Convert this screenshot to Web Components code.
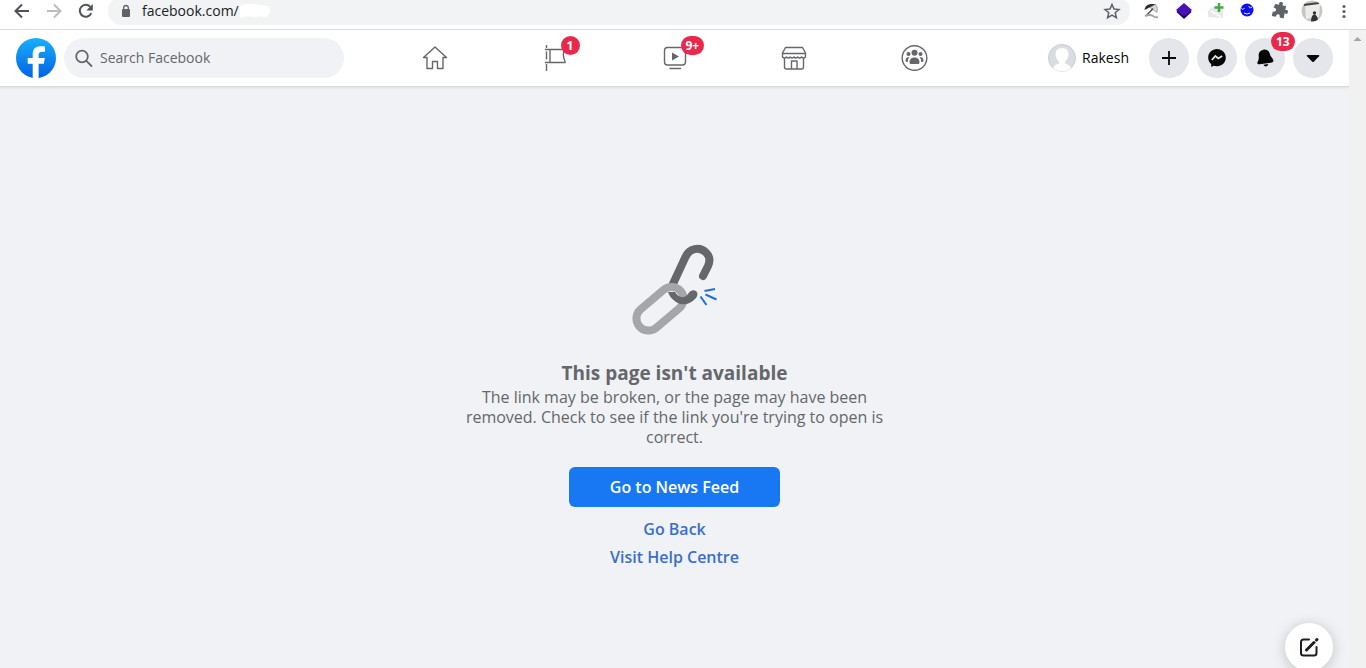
<!DOCTYPE html>
<html lang="en">
<head>
<meta charset="utf-8">
<title>Page not available | Facebook</title>
<style>
html, body { margin: 0; height: 100%; }
body { font-family: "Open Sans", "Noto Sans", sans-serif; color: #050505; background: #f0f2f5; overflow: hidden; }
</style>
</head>
<body>
<browser-window></browser-window>

<script>
const define = (name, html) => {
  const template = document.createElement('template');
  template.innerHTML = html;
  customElements.define(name, class extends HTMLElement {
    constructor() {
      super();
      this.attachShadow({ mode: 'open' }).append(template.content.cloneNode(true));
    }
  });
};

define('browser-toolbar', `
<style>
:host { display: flex; align-items: center; height: 30px; box-sizing: border-box; padding: 0 11px 7px 11px; background: #fff; border-bottom: 1px solid #dadce0; }
button { border: 0; padding: 0; background: none; display: block; flex: none; height: 22px; }
svg { display: block; }
.nav { display: flex; gap: 10px; width: 97px; flex: none; }
.address { flex: 1; display: flex; align-items: center; height: 28px; box-sizing: border-box; padding: 0 8px 0 12px; background: #f1f3f4; border-radius: 14px; min-width: 0; }
.address label { flex: none; margin-right: 10px; }
input { width: 98px; border: 0; padding: 0; background: none; outline: 0; font: 14px/20px "Open Sans", sans-serif; color: #202124; height: 20px; }
.blot { flex: none; margin-right: auto; }
.ext { display: flex; align-items: center; gap: 10px; flex: none; padding-left: 11px; }
</style>
<div class="nav">
  <button aria-label="Back"><svg width="22" height="22" viewBox="0 0 22 22" fill="none" stroke="#50545a" stroke-width="2"><path d="M18 11H5M11 4.5 4.5 11l6.500 6.500"/></svg></button>
  <button aria-label="Forward"><svg width="22" height="22" viewBox="0 0 22 22" fill="none" stroke="#b9bbbe" stroke-width="2"><path d="M4 11h13M11 4.500 17.500 11 11 17.500"/></svg></button>
  <button aria-label="Reload"><svg width="22" height="22" viewBox="0 0 22 22"><path d="M16.300 13.200A6 6 0 1 1 15.300 6.800" fill="none" stroke="#50545a" stroke-width="2"/><path d="M17.800 4v6.500h-6.500z" fill="#50545a"/></svg></button>
</div>
<div class="address">
  <label for="url" aria-label="Address"><svg width="12" height="14" viewBox="0 0 12 14"><rect x="2" y="5" width="8" height="8" rx="1" fill="#5f6368"/><path d="M3.700 6V3.800a2.300 2.300 0 0 1 4.600 0V6" fill="none" stroke="#5f6368" stroke-width="1.300"/></svg></label>
  <input id="url" value="facebook.com/">
  <svg class="blot" width="32" height="18" viewBox="0 0 32 18"><path d="M0 4Q8 0 18 3l10 1q4 4 1 8l-3 3q-6-1-12 0-7-2-14 1z" fill="#fff"/></svg>
  <button aria-label="Bookmark"><svg width="20" height="22" viewBox="0 0 20 22"><path d="m10 4.500 2 4.600 5 .4-3.800 3.300 1.200 4.900-4.400-2.600-4.400 2.600 1.200-4.900L3 9.500l5-.4z" fill="none" stroke="#5f6368" stroke-width="1.500"/></svg></button>
</div>
<div class="ext">
  <button aria-label="Adblock"><svg width="22" height="22" viewBox="0 0 22 22"><path d="M3.500 10C4 5 9 3 14.500 4.500z" fill="#2b2b2b"/><path d="M14.500 4.500q3 3 1.500 8L9 7.500z" fill="#d8dad8" stroke="#777" stroke-width=".6"/><path d="M12 8.500 5.500 15.500" stroke="#444" stroke-width="1.300"/><path d="M4 16q5-2 8 0t5 1" fill="none" stroke="#a5a5a5" stroke-width="2"/></svg></button>
  <button aria-label="Layers"><svg width="22" height="22" viewBox="0 0 22 22"><path d="m3.500 12 1.500-2h12l1.500 2-7.500 7z" fill="#24007a"/><path d="M11 3l8 7-8 6-8-6z" fill="#4a12b5"/></svg></button>
  <button aria-label="Add-on"><svg width="22" height="22" viewBox="0 0 22 22"><path d="M3 17q-1-8 5-10h8l2 4v7z" fill="#e8e8e8"/><path d="m6 11 10 6" stroke="#fafafa" stroke-width="2"/><path d="M14 3v9M9.500 7.500h9" stroke="#43a847" stroke-width="2.500"/></svg></button>
  <button aria-label="Assistant"><svg width="22" height="22" viewBox="0 0 22 22"><circle cx="10" cy="10" r="6.500" fill="#0a12ef"/><path d="M3.500 7q2 4 4 1M12 6q0 3 3 1M7 13q3 2 6 0" fill="none" stroke="#e6e8ff" stroke-width="1"/></svg></button>
  <button aria-label="Extensions"><svg width="22" height="22" viewBox="0 0 22 22"><path d="M5 5h4q-1.500-3 1.500-3T12 5h4v4q3-1.500 3 1.500T16 12v5.500h-4q0-3-2-3t-2 3H4V13q3 0 3-2T4 9z" transform="rotate(12 11 11)" fill="#5f6368"/></svg></button>
  <button aria-label="Profile"><svg width="22" height="22" viewBox="0 0 22 22"><defs><clipPath id="face"><circle cx="11" cy="11" r="10.500"/></clipPath></defs><g clip-path="url(#face)"><path d="M0 0h22v22H0z" fill="#c6c6c4"/><path d="M4 5 19 4l-1 13-13 2z" fill="#ececea"/><path d="m2 4 16-2v2L3 6z" fill="#444"/><path d="M10 22q0-7 3-7.500 4 0 4 7.500z" fill="#333"/><circle cx="13.500" cy="13" r="1.700" fill="#333"/></g></svg></button>
  <button aria-label="Menu"><svg width="22" height="22" viewBox="0 0 22 22" fill="#5f6368"><circle cx="11" cy="6.500" r="1.600"/><circle cx="11" cy="11.500" r="1.600"/><circle cx="11" cy="16.500" r="1.600"/></svg></button>
</div>`);

define('count-badge', `
<style>
:host { position: absolute; display: block; box-sizing: border-box; min-width: 19px; height: 19px; padding: 0 5px; border-radius: 10px; background: #e9294b; color: #fff; font-size: 12px; line-height: 19px; font-weight: 700; text-align: center; }
</style><slot></slot>`);

define('nav-tab', `
<style>
:host { display: block; flex: 1; }
a { display: flex; align-items: center; justify-content: center; height: 56px; color: #65676b; }
span { position: relative; display: block; width: 28px; height: 28px; }
::slotted(svg) { display: block; }
::slotted(count-badge) { left: 20px; top: -8px; }
</style><a href="#"><span><slot></slot></span></a>`);

define('round-button', `
<style>
:host { display: block; position: relative; flex: none; }
button { display: flex; align-items: center; justify-content: center; width: 40px; height: 40px; border: 0; padding: 0; border-radius: 50%; background: #e4e6eb; color: #050505; }
::slotted(count-badge) { left: 26px; top: -6px; }
</style><button><slot></slot></button><slot name="badge"></slot>`);

define('site-header', `
<style>
:host { display: grid; grid-template-columns: 1fr 600px 1fr; align-items: center; height: 57px; box-sizing: border-box; padding: 0 16px; background: #fff; border-bottom: 1px solid #d9dbdf; box-shadow: 0 1px 2px rgba(0,0,0,.08); }
.left, .right { display: flex; align-items: center; gap: 8px; }
.right { justify-content: flex-end; }
nav { display: flex; }
.logo, .logo svg { display: block; }
.search { display: flex; align-items: center; box-sizing: border-box; width: 280px; height: 40px; padding: 0 10px; gap: 6px; border-radius: 20px; background: #f0f2f5; }
.search label { display: block; height: 20px; }
input { flex: 1; min-width: 0; border: 0; padding: 0; background: none; outline: 0; font: 14px/20px "Open Sans", sans-serif; color: #65676b; }
input::placeholder { color: #65676b; opacity: 1; }
.user { display: flex; align-items: center; gap: 6px; margin-right: 12px; color: #050505; text-decoration: none; font-size: 14px; line-height: 20px; font-weight: 500; }
</style>
<div class="left">
  <a class="logo" href="#" aria-label="Facebook"><svg width="40" height="40" viewBox="0 0 40 40"><defs><linearGradient id="g" x2="0" y2="1"><stop stop-color="#19afff"/><stop offset="1" stop-color="#0062e0"/></linearGradient></defs><circle cx="20" cy="20" r="20" fill="url(#g)"/><path d="M16.700 39.800V25.800h-5v-5.800h5v-3.700c0-5.200 2.700-8.100 7.800-8.100 2 0 3.500.2 4.500.4v5.200h-2.800c-2.800 0-3.600 1.200-3.600 3.500V20h6.200l-1 5.800h-5.200v14a20 20 0 0 1-5.900 0z" fill="#fff"/></svg></a>
  <div class="search"><label for="q" aria-label="Search"><svg width="20" height="20" viewBox="0 0 20 20" fill="none" stroke="#65676b" stroke-width="1.800"><circle cx="8" cy="8.500" r="5.800"/><path d="m12.300 12.800 5.200 5.200" stroke-linecap="round"/></svg></label><input id="q" placeholder="Search Facebook"></div>
</div>
<nav>
  <nav-tab><svg width="28" height="28" viewBox="0 0 28 28" fill="none" stroke="currentColor" stroke-width="1.400" stroke-linejoin="round"><path d="M14 3 2.500 13.500H6V24.500h5.500v-7h5v7H22v-11h3.500z"/></svg></nav-tab>
  <nav-tab><svg width="28" height="28" viewBox="0 0 28 28" fill="none" stroke="currentColor" stroke-width="1.400"><path d="M5.500 1v3M5.500 7.500v8M5.500 20v7M4 5.500h20.500M4 18.500h20.500M9 5.500v13M24 5.500q-3.500 5 .5 13"/></svg><count-badge>1</count-badge></nav-tab>
  <nav-tab><svg width="28" height="28" viewBox="0 0 28 28" fill="none" stroke="currentColor" stroke-width="1.400"><rect x="3.500" y="3.500" width="21" height="17.500" rx="3"/><path d="M9 24.500h10.500" stroke-linecap="round"/><path d="m11 8.500 7 4-7 4z" fill="currentColor" stroke="none"/></svg><count-badge>9+</count-badge></nav-tab>
  <nav-tab><svg width="28" height="28" viewBox="0 0 28 28" fill="none" stroke="currentColor" stroke-width="1.400" stroke-linejoin="round"><path d="M4.500 3.500h17l3 5.500v4q-2 2-4 0-2 2-3.800 0-2 2-3.700 0-2 2-3.800 0-2 2-3.700 0-2 2-4 0V9zM1.500 9.500h23M3.500 14v9q0 2 2 2h15q2 0 2-2v-9M10.500 24.500v-7.500h5.500v7.500"/></svg></nav-tab>
  <nav-tab><svg width="28" height="28" viewBox="0 0 28 28"><circle cx="13.500" cy="14" r="12.300" fill="none" stroke="currentColor" stroke-width="1.400"/><g fill="currentColor" transform="translate(-.5)"><circle cx="14" cy="8.800" r="3"/><circle cx="8" cy="10" r="2"/><circle cx="20" cy="10" r="2"/><path d="M9 18.500c0-3.500 2-5 5-5s5 1.500 5 5q0 1.500-1.500 1.500h-7q-1.500 0-1.500-1.500zM5 16.500c0-2.500 1.500-3.500 4-3.500-1.200 1.500-1.700 2.800-1.700 5-1.500 0-2.300-.5-2.300-1.500zM23 16.500c0-2.500-1.500-3.500-4-3.500 1.200 1.500 1.700 2.800 1.700 5 1.500 0 2.300-.5 2.300-1.500z"/></g></svg></nav-tab>
</nav>
<div class="right">
  <a class="user" href="#"><svg width="28" height="28" viewBox="0 0 28 28"><circle cx="14" cy="14" r="13.500" fill="#d9dce1" stroke="#c9ccd1"/><path d="M5 24q1-3.500 6-4.500v-2Q7.500 15 7.500 10q0-6 6.500-6t6.500 6q0 5-3.500 7.500v2q5 1 6 4.500a13 13 0 0 1-18 0z" fill="#fff"/></svg>Rakesh</a>
  <round-button aria-label="Create"><svg width="20" height="20" viewBox="0 0 20 20"><path d="M10 3v14M3 10h14" stroke="currentColor" stroke-width="1.800"/></svg></round-button>
  <round-button aria-label="Messenger"><svg width="20" height="20" viewBox="0 0 20 20"><path d="M10 1C5 1 1.200 4.600 1.200 9.500c0 2.700 1.100 4.900 3 6.500V19l2.500-1.300c1 .3 2.100.5 3.300.5 5 0 8.800-3.700 8.800-8.600S15 1 10 1z" fill="currentColor"/><path d="m4.800 12 3.500-4 3 2.500L15.200 8" fill="none" stroke="#e4e6eb" stroke-width="1.800"/></svg></round-button>
  <round-button aria-label="Notifications"><svg width="20" height="20" viewBox="0 0 20 20" fill="currentColor"><g transform="rotate(-8 10 10)"><path d="M9.500 1.500c4-.2 6 2.500 6 6 0 2 2.500 4 2.500 6 0 1.500-1 2-3 2H4c-2 0-2.800-1-2-2.500 1.500-2 2-3.500 2-5.500 0-3.500 2-5.900 5.500-6zM7.500 16.500h5q-.7 2-2.500 2t-2.500-2z"/></g></svg><count-badge slot="badge">13</count-badge></round-button>
  <round-button aria-label="Account"><svg width="20" height="20" viewBox="0 0 20 20"><path d="M4.500 7h11q1.500 0 .5 1.200L11 13.500q-1 1-2 0L4 8.200Q3 7 4.500 7z" fill="currentColor"/></svg></round-button>
</div>`);

define('missing-page', `
<style>
:host { display: flex; flex-direction: column; align-items: center; padding: 157px 16px 0; color: #65676b; text-align: center; }
svg { display: block; }
h1 { margin: 23px 0 0; font-size: 19px; line-height: 28px; font-weight: 700; }
p { margin: 0; max-width: 440px; font-size: 16px; line-height: 20px; }
button { margin: 20px 0 8px; width: 211px; height: 40px; border: 0; border-radius: 6px; background: #1877f2; color: #fff; font: 600 16px/20px "Open Sans", sans-serif; padding: 0; }
a { font-size: 16px; line-height: 28px; font-weight: 600; color: #3a6fc9; text-decoration: none; }
</style>
<svg width="88" height="92" viewBox="0 0 88 92" fill="none" stroke-width="8">
  <path d="M41 42 54 14C58 3.500 69 2.500 75 8.500c3.500 3.500 4.500 8 2 13.500l-5 10" stroke="#65676b" stroke-linecap="round"/>
  <path d="M9.700 65.300 32.700 45.800a12 12 0 0 1 15.600 18.400l-23 19.500A12 12 0 0 1 9.700 65.300z" stroke="#a4a6aa"/>
  <path d="M37 48h7c4 6 9 7 13 2 2-3 5-5 8-3 2 2 2 4 0 7-6 7-14 8-20 4-4-3-7-6-8-10z" fill="#65676b"/>
  <path d="m73.500 47 10.500-2M74.500 50.500l11 5M69.500 52.500l6 8.500" stroke="#216fdb" stroke-width="2"/>
</svg>
<h1>This page isn't available</h1>
<p>The link may be broken, or the page may have been removed. Check to see if the link you're trying to open is correct.</p>
<button>Go to News Feed</button>
<a href="#">Go Back</a>
<a href="#">Visit Help Centre</a>`);

define('compose-button', `
<style>
:host { position: absolute; right: 16px; bottom: -3px; display: block; }
button { display: flex; align-items: center; justify-content: center; width: 48px; height: 48px; border: 0; padding: 0; border-radius: 50%; background: #fff; box-shadow: 0 2px 14px rgba(0,0,0,.2); }
</style>
<button aria-label="New message"><svg width="20" height="20" viewBox="0 0 20 20" fill="none" stroke="#1c1e21" stroke-width="2" stroke-linecap="round"><path d="M10 2.500H4.500q-2.500 0-2.500 2.500v11q0 2.500 2.500 2.500h10.500q2.500 0 2.500-2.500V10"/><path d="m7.500 13 7.500-7.500M17.500 3l.5-.5" stroke-width="3"/></svg></button>`);

define('scroll-bar', `
<style>
:host { display: block; flex: none; width: 17px; background: #f1f1f1; }
svg { display: block; }
</style>
<svg width="17" height="17" viewBox="0 0 17 17"><path d="m4.500 11 4-4 4 4z" fill="#a3a3a3"/></svg>`);

define('browser-window', `
<style>
:host { display: flex; flex-direction: column; height: 100vh; overflow: hidden; }
.view { flex: 1; display: flex; min-height: 0; }
.page { flex: 1; position: relative; min-width: 0; overflow: hidden; background: #f0f2f5; }
</style>
<browser-toolbar></browser-toolbar>
<div class="view">
  <div class="page"><site-header></site-header><missing-page></missing-page><compose-button></compose-button></div>
  <scroll-bar></scroll-bar>
</div>`);
</script>
</body>
</html>
